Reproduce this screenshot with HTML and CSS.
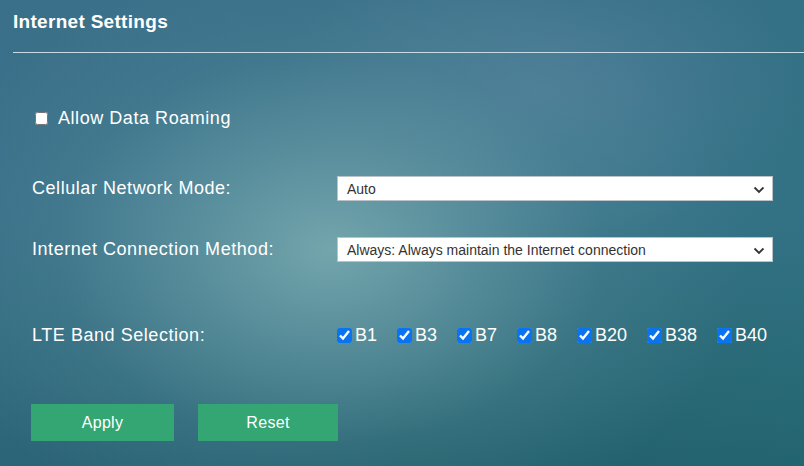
FILE: index.html
```html
<!DOCTYPE html>
<html>
<head>
<meta charset="utf-8">
<link rel="stylesheet" href="styles.css">
</head>
<body>
<div class="page">
  <h1 class="title">Internet Settings</h1>
  <div class="rule"></div>
  <form class="form">
    <label class="roam"><input type="checkbox" class="cb-plain"><span>Allow Data Roaming</span></label>
    <div class="row row-mode">
      <div class="label">Cellular Network Mode:</div>
      <div class="select">
        <span class="select-text">Auto</span>
        <svg class="chev" width="12" height="8" viewBox="0 0 12 8"><path d="M1.5 1.5 L6 6 L10.5 1.5" fill="none" stroke="#333" stroke-width="1.8"/></svg>
      </div>
    </div>
    <div class="row row-method">
      <div class="label">Internet Connection Method:</div>
      <div class="select">
        <span class="select-text">Always: Always maintain the Internet connection</span>
        <svg class="chev" width="12" height="8" viewBox="0 0 12 8"><path d="M1.5 1.5 L6 6 L10.5 1.5" fill="none" stroke="#333" stroke-width="1.8"/></svg>
      </div>
    </div>
    <div class="row row-lte">
      <div class="label">LTE Band Selection:</div>
      <div class="bands">
        <label class="band"><input type="checkbox" checked><span>B1</span></label>
        <label class="band"><input type="checkbox" checked><span>B3</span></label>
        <label class="band"><input type="checkbox" checked><span>B7</span></label>
        <label class="band"><input type="checkbox" checked><span>B8</span></label>
        <label class="band b-long"><input type="checkbox" checked><span>B20</span></label>
        <label class="band b-long"><input type="checkbox" checked><span>B38</span></label>
        <label class="band"><input type="checkbox" checked><span>B40</span></label>
      </div>
    </div>
    <div class="buttons">
      <button type="button" class="btn">Apply</button>
      <button type="button" class="btn">Reset</button>
    </div>
  </form>
</div>
</body>
</html>
```
FILE: styles.css
```css
html, body {
  margin: 0;
  padding: 0;
}
body {
  width: 804px;
  height: 466px;
  overflow: hidden;
  font-family: "Liberation Sans", Arial, sans-serif;
  color: #fff;
  background:
    radial-gradient(ellipse 420px 300px at 330px 250px, rgba(118,168,174,0.95) 0%, rgba(100,152,164,0.7) 35%, rgba(80,135,152,0.35) 65%, rgba(80,135,152,0) 100%),
    radial-gradient(ellipse 260px 150px at 540px 90px, rgba(100,140,170,0.5) 0%, rgba(100,140,170,0) 100%),
    linear-gradient(90deg, rgba(60,110,140,0.4) 0%, rgba(60,110,140,0) 50%, rgba(40,115,130,0.3) 100%),
    linear-gradient(180deg, #3a7088 0%, #387287 45%, #2a6773 80%, #225e6a 100%);
}
.page {
  padding: 10px 0 0 13px;
}
.title {
  margin: 0;
  font-size: 19px;
  font-weight: bold;
  line-height: 23px;
  letter-spacing: 0.3px;
}
.rule {
  margin-top: 19px;
  height: 1px;
  background: #c6dce4;
}
.form {
  padding-left: 19px;
}
.roam {
  display: flex;
  align-items: center;
  margin-top: 55px;
  height: 20px;
  margin-left: 3px;
  font-size: 18px;
  letter-spacing: 0.55px;
}
.cb-plain {
  width: 13px;
  height: 13px;
  margin: 0 10px 0 0;
  accent-color: #fff;
}
.row {
  display: flex;
  align-items: center;
}
.label {
  width: 305px;
  font-size: 18px;
  letter-spacing: 0.55px;
}
.row-mode {
  margin-top: 48px;
}
.row-method {
  margin-top: 36px;
}
.row-lte {
  margin-top: 63px;
}
.select {
  position: relative;
  width: 434px;
  height: 23px;
  background: #fff;
  border: 1px solid #b9c3c8;
  display: flex;
  align-items: center;
  color: #333;
  font-family: "Liberation Sans", Arial, sans-serif;
  font-size: 14px;
}
.select-text {
  padding-left: 9px;
}
.chev {
  position: absolute;
  right: 7px;
  top: 9px;
}
.bands {
  display: flex;
  align-items: center;
}
.band {
  display: flex;
  align-items: center;
  width: 60px;
  font-size: 18px;
  letter-spacing: 0px;
}
.band.b-long {
  width: 70px;
}
.band input {
  width: 15px;
  height: 15px;
  margin: 0 3px 0 0;
  accent-color: #0a74f0;
}
.buttons {
  display: flex;
  gap: 24px;
  margin-top: 58px;
  margin-left: -1px;
}
.btn {
  width: 143px;
  height: 37px;
  border: none;
  background: #33a673;
  color: #fff;
  font-family: "Liberation Sans", Arial, sans-serif;
  font-size: 16px;
  letter-spacing: 0.3px;
  padding: 0;
}
.btn + .btn {
  width: 140px;
}
```
